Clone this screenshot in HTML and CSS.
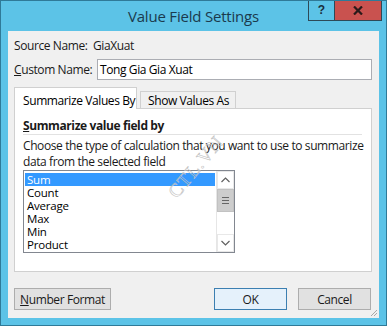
FILE: index.html
```html
<!DOCTYPE html>
<html>
<head>
<meta charset="utf-8">
<link rel="stylesheet" href="styles.css">
</head>
<body>
<div class="window">
  <div class="titlebar">
    <div></div>
    <div class="title">Value Field Settings</div>
    <div class="caption-btns">
      <span class="cap-help">?</span>
      <span class="cap-close"><svg width="10" height="9" viewBox="0 0 10 9"><path d="M1 0.5 L9 8.5 M9 0.5 L1 8.5" stroke="#2a1a1a" stroke-width="2.2"/></svg></span>
    </div>
  </div>
  <div class="client">
    <div class="row">
      <span class="label source-label">Source Name:</span>
      <span class="value">GiaXuat</span>
    </div>
    <div class="row custom-row">
      <span class="label custom-label"><u>C</u>ustom Name:</span>
      <div class="input">Tong Gia Gia Xuat</div>
    </div>
    <div class="tabs">
      <div class="tab active">Summarize Values By</div>
      <div class="tab">Show Values As</div>
    </div>
    <div class="panel">
      <div class="group-title"><u>S</u>ummarize value field by</div>
      <div class="desc">Choose the type of calculation that you want to use to summarize data from the selected field</div>
      <div class="listbox">
        <ul class="items">
          <li class="selected">Sum</li>
          <li>Count</li>
          <li>Average</li>
          <li>Max</li>
          <li>Min</li>
          <li>Product</li>
        </ul>
        <div class="scrollbar">
          <div class="sb-arrow sb-up"><svg width="9" height="6" viewBox="0 0 9 6"><path d="M0.5 5 L4.5 1 L8.5 5" fill="none" stroke="#606060" stroke-width="1.2"/></svg></div>
          <div class="sb-thumb"><span></span><span></span><span></span></div>
          <div class="sb-track"></div>
          <div class="sb-arrow sb-down"><svg width="9" height="6" viewBox="0 0 9 6"><path d="M0.5 1 L4.5 5 L8.5 1" fill="none" stroke="#606060" stroke-width="1.2"/></svg></div>
        </div>
      </div>
    </div>
    <div class="buttons">
      <button class="btn btn-format"><u>N</u>umber Format</button>
      <span class="spacer"></span>
      <button class="btn btn-ok">OK</button>
      <button class="btn btn-cancel">Cancel</button>
    </div>
  </div>
  <span class="watermark">CTL.VN</span>
  <svg class="grip" width="9" height="9" viewBox="0 0 9 9"><path d="M8 2 L2 8 M8 5 L5 8" stroke="#a8a8a8" stroke-width="1"/></svg>
</div>
</body>
</html>
```

FILE: styles.css
```css
html, body {
  margin: 0;
  padding: 0;
}
body {
  font-family: "Open Sans", "Noto Sans", sans-serif;
  font-size: 12px;
  letter-spacing: -0.4px;
  color: #000;
}
.window {
  position: relative;
  width: 387px;
  height: 326px;
  box-sizing: border-box;
  background: #5cc3e7;
  border: 1px solid #2f7a98;
  padding: 0 7px 7px 7px;
  display: flex;
  flex-direction: column;
  overflow: hidden;
}
.titlebar {
  height: 30px;
  display: grid;
  grid-template-columns: 1fr auto 1fr;
  align-items: start;
}
.title {
  font-size: 15px;
  letter-spacing: -0.2px;
  line-height: 31px;
  color: #1b3a4d;
  white-space: nowrap;
}
.caption-btns {
  justify-self: end;
  display: flex;
  margin-top: -1px;
  margin-right: -3px;
  height: 21px;
  box-sizing: border-box;
  border: 1px solid #2d4a58;
  border-top: none;
}
.cap-help {
  width: 25px;
  display: flex;
  align-items: center;
  justify-content: center;
  font-family: "Liberation Sans", sans-serif;
  font-weight: bold;
  font-size: 12px;
  letter-spacing: 0;
  color: #1a2e3c;
}
.cap-close {
  width: 46px;
  background: #c9524f;
  border-left: 1px solid #2d4a58;
  display: flex;
  align-items: center;
  justify-content: center;
}
.client {
  flex: 1;
  background: #f0f0f0;
  padding: 0 7px 0 6px;
  display: flex;
  flex-direction: column;
}
.row {
  display: flex;
  align-items: center;
  height: 20px;
  margin-top: 4px;
  white-space: nowrap;
}
.label {
  flex: none;
  color: #1a1a1a;
}
.source-label {
  width: 79px;
}
.value {
  color: #1a1a1a;
}
.custom-row {
  height: 21px;
}
.custom-label {
  width: 83px;
}
.input {
  flex: 1;
  height: 21px;
  box-sizing: border-box;
  background: #fff;
  border: 1px solid #abadb3;
  padding: 0 0 0 2px;
  line-height: 19px;
}
.tabs {
  display: flex;
  align-items: flex-end;
  margin-top: 7px;
  margin-bottom: -1px;
  white-space: nowrap;
}
.tab {
  box-sizing: border-box;
  border: 1px solid #d0d0d0;
  border-bottom: none;
  background: #f0f0f0;
  height: 18px;
  line-height: 17px;
  padding-left: 7px;
  width: 96px;
  margin-left: 3px;
  overflow: hidden;
}
.tab.active {
  position: relative;
  z-index: 1;
  background: #fff;
  height: 22px;
  line-height: 25px;
  width: 123px;
  margin-left: 0;
  padding-left: 8px;
}
.panel {
  height: 164px;
  box-sizing: border-box;
  background: #fff;
  border: 1px solid #d0d0d0;
  padding: 8px 9px 0 8px;
  display: flex;
  flex-direction: column;
}
.group-title {
  font-weight: bold;
  line-height: 17px;
  border-bottom: 1px solid #e2e2e2;
  color: #1a1a1a;
  white-space: nowrap;
}
.desc {
  margin-top: 3px;
  margin-right: -4px;
  line-height: 16px;
  color: #1a1a1a;
}
.listbox {
  width: 212px;
  height: 83px;
  box-sizing: border-box;
  border: 1px solid #828790;
  display: flex;
}
.items {
  flex: 1;
  list-style: none;
  margin: 0;
  padding: 2px 1px 0 1px;
}
.items li {
  height: 13px;
  line-height: 13px;
  padding-left: 2px;
  font-size: 11.5px;
  letter-spacing: -0.2px;
}
.items li.selected {
  background: #3399ff;
  color: #fff;
}
.scrollbar {
  width: 17px;
  display: flex;
  flex-direction: column;
  background: #fff;
  border-left: 1px solid #e6e6e6;
}
.sb-arrow {
  height: 18px;
  display: flex;
  align-items: center;
  justify-content: center;
  border: 1px solid #e8e8e8;
  box-sizing: border-box;
  background: #fff;
}
.sb-thumb {
  height: 23px;
  background: #cdcdcd;
  border: 1px solid #c2c2c2;
  box-sizing: border-box;
  display: flex;
  flex-direction: column;
  align-items: center;
  justify-content: center;
  gap: 2px;
}
.sb-thumb span {
  display: block;
  width: 7px;
  height: 1px;
  background: #666;
}
.sb-track {
  flex: 1;
  background: #fff;
}
.buttons {
  display: flex;
  margin-top: 16px;
  padding-right: 1px;
}
.spacer {
  flex: 1;
}
.btn {
  font-family: inherit;
  font-size: 12px;
  letter-spacing: -0.4px;
  height: 22px;
  box-sizing: border-box;
  border: 1px solid #adadad;
  background: #e1e1e1;
  color: #1a1a1a;
  padding: 0;
  margin: 0;
}
.btn-format {
  width: 97px;
}
.btn-ok {
  width: 73px;
  background: #e5f1fb;
  border-color: #3c7fb1;
}
.btn-cancel {
  width: 73px;
  margin-left: 11px;
}
.watermark {
  position: absolute;
  left: 158px;
  top: 155px;
  font-family: "Liberation Serif", serif;
  font-size: 19px;
  color: transparent;
  -webkit-text-stroke: 0.6px #c2c2c2;
  transform: rotate(-50deg);
  letter-spacing: 1px;
}
.grip {
  position: absolute;
  right: 8px;
  bottom: 8px;
}
```
